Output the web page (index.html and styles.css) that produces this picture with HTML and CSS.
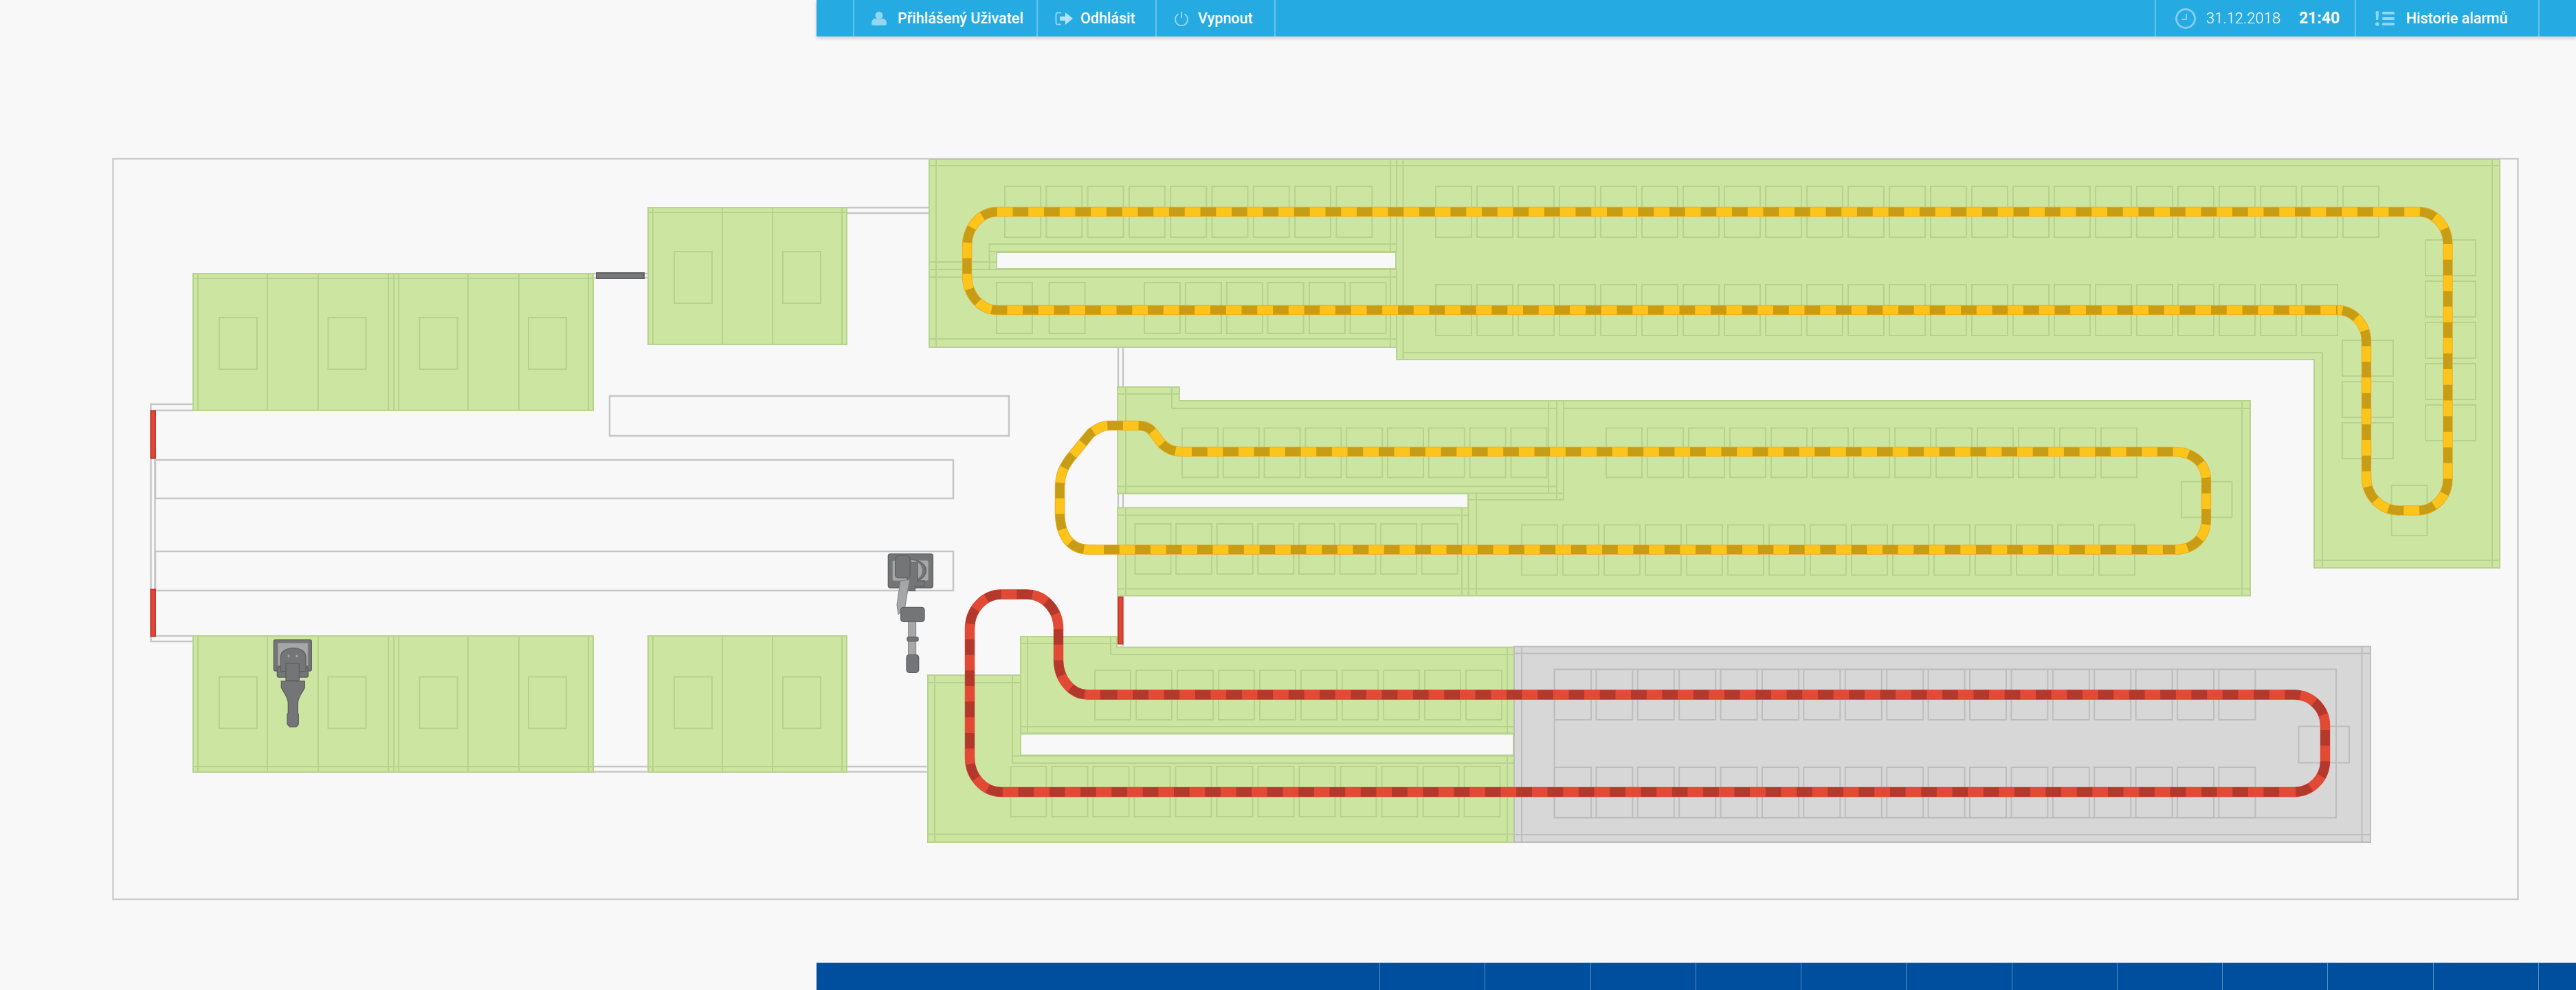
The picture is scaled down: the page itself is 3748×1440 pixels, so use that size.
FILE: index.html
```html
<!DOCTYPE html>
<html lang="cs">
<head>
<meta charset="utf-8">
<title>Přehled linky</title>
<link rel="stylesheet" href="styles.css">
</head>
<body>
<div class="page">
  <header class="topbar">
    <div class="cell cell-end"></div>
    <div class="cell cell-user">
      <svg class="icon" width="22" height="20" viewBox="0 0 22 20"><circle class="icon-fill" cx="11" cy="5.500" r="5.500"/><path class="icon-fill" d="M0 17c0-5 3-7 6-7 2 1.300 8 1.300 10 0 3 0 6 2 6 7 0 2-1 3-3 3H3c-2 0-3-1-3-3z"/></svg>
      <span class="label">Přihlášený Uživatel</span>
    </div>
    <div class="cell cell-short">
      <svg class="icon" width="27" height="20" viewBox="0 0 27 20"><path class="icon-line" d="M9 1.500H4Q1.500 1.500 1.500 4V16Q1.500 18.500 4 18.500H9"/><path class="icon-bright" d="M7 7h8V1l11 9-11 9v-6H7z"/></svg>
      <span class="label">Odhlásit</span>
    </div>
    <div class="cell cell-short cell-power">
      <svg class="icon" width="22" height="22" viewBox="0 0 22 22"><path class="icon-line" d="M6.500 4.500A9 9 0 1 0 15.500 4.500M11 1V10"/></svg>
      <span class="label">Vypnout</span>
    </div>
    <div class="spacer"></div>
    <div class="cell cell-clock">
      <svg class="icon" width="32" height="30" viewBox="0 0 32 30"><circle class="icon-ring" cx="16" cy="15" r="13.500"/><path class="icon-thin" d="M17 8v8h-7"/></svg>
      <span class="date">31.12.2018</span>
      <span class="time">21:40</span>
    </div>
    <div class="cell cell-history">
      <svg class="icon" width="28" height="22" viewBox="0 0 28 22"><path class="icon-fill" d="M0.500 1.500Q0.500 0 2.800 0T5 1.500L4.300 13H1.200z"/><circle class="icon-fill" cx="2.800" cy="19" r="2.800"/><rect class="icon-fill" x="10" y="1" width="18" height="4" rx="1.500"/><rect class="icon-fill" x="10" y="9" width="18" height="4" rx="1.500"/><rect class="icon-fill" x="10" y="17" width="18" height="4" rx="1.500"/></svg>
      <span class="label">Historie alarmů</span>
    </div>
    <div class="cell cell-tail"></div>
  </header>

  <main class="stage">
    <svg class="plan" width="3748" height="1347" viewBox="0 53 3748 1347">
      <rect class="frame" x="164.500" y="231" width="3499" height="1077"/>

      <!-- stations -->
      <path class="rail" d="M887 576H1468V634H887zM226 669H1387V725H226zM226 802H1387V859H226z"/>
      <path class="rail" d="M280 588H219.500V933H280M280 597H225.500V925H280M864 398H943M864 404H943M1232 302H1352M1232 310H1352M864 1115H943M864 1122.500H943M1232 1115H1350M1232 1122.500H1350M1627 505V563M1634 505V563M1627 718V739M1634 718V738M1627 868V926M1634 868V940"/>

      <!-- left green blocks -->
      <rect class="zone" x="281" y="398" width="582" height="199"/>
      <rect class="zone" x="943" y="302" width="289" height="199"/>
      <rect class="zone" x="281" y="925" width="582" height="198"/>
      <rect class="zone" x="943" y="925" width="289" height="198"/>
      <path class="zone-line" d="M281 405H863M288 398V597M389 398V597M463 398V597M565 398V597M573 398V597M580 398V597M681 398V597M755 398V597M856 398V597"/>
      <path class="zone-line" d="M943 309H1232M950 302V501M1051 302V501M1124 302V501M1225 302V501"/>
      <path class="zone-line" d="M281 1115H863M288 925V1123M389 925V1123M463 925V1123M565 925V1123M573 925V1123M580 925V1123M681 925V1123M755 925V1123M856 925V1123"/>
      <path class="zone-line" d="M943 1115H1232M950 925V1123M1051 925V1123M1124 925V1123M1225 925V1123"/>
      <path class="zone-line" d="M319 462h55v75h-55zM477.500 462h55v75h-55zM610.500 462h55v75h-55zM769 462h55v75h-55zM981 366h55v75h-55zM1139 366h55v75h-55zM319 984.500h55v75h-55zM477.500 984.500h55v75h-55zM610.500 984.500h55v75h-55zM769 984.500h55v75h-55zM981 984.500h55v75h-55zM1139 984.500h55v75h-55z"/>

      <!-- upper zone -->
      <path class="zone" fill-rule="evenodd" d="M1352 232H3637V826H3367V523H2032V505H1352ZM1450 367H2031V391H1450Z"/>
      <path class="zone-line" d="M1352 241H3637M1362 232V505M2023 232V367M2023 391V505M2032 232V367M2032 391V523M2041.500 232V523M2041.500 513H3379M3379 513V826M3367 523V826M3626 232V826M3367 815H3637M1439.500 392V355H2032M1439.500 366H2032M1352 381H1450M1352 392H2032M1352 403H2032M1352 493H2032"/>
      <path class="zone-line" d="M1462 271h52v74h-52zm60.300 0h52v74h-52zm60.300 0h52v74h-52zm60.300 0h52v74h-52zm60.300 0h52v74h-52zm60.300 0h52v74h-52zm60.300 0h52v74h-52zm60.300 0h52v74h-52zm60.300 0h52v74h-52z"/>
      <path class="zone-line" d="M1450 411h52v74h-52zM1526.500 411h52v74h-52zM1665 411h52v74h-52zM1725 411h52v74h-52zM1785 411h52v74h-52zM1844.600 411h52v74h-52zM1905 411h52v74h-52zM1964.600 411h52v74h-52z"/>
      <path class="zone-line" d="M2089 271h52v74h-52zm60 0h52v74h-52zm60 0h52v74h-52zm60 0h52v74h-52zm60 0h52v74h-52zm60 0h52v74h-52zm60 0h52v74h-52zm60 0h52v74h-52zm60 0h52v74h-52zm60 0h52v74h-52zm60 0h52v74h-52zm60 0h52v74h-52zm60 0h52v74h-52zm60 0h52v74h-52zm60 0h52v74h-52zm60 0h52v74h-52zm60 0h52v74h-52zm60 0h52v74h-52zm60 0h52v74h-52zm60 0h52v74h-52zm60 0h52v74h-52zm60 0h52v74h-52zm60 0h52v74h-52z"/>
      <path class="zone-line" d="M2089 414h52v74h-52zm60 0h52v74h-52zm60 0h52v74h-52zm60 0h52v74h-52zm60 0h52v74h-52zm60 0h52v74h-52zm60 0h52v74h-52zm60 0h52v74h-52zm60 0h52v74h-52zm60 0h52v74h-52zm60 0h52v74h-52zm60 0h52v74h-52zm60 0h52v74h-52zm60 0h52v74h-52zm60 0h52v74h-52zm60 0h52v74h-52zm60 0h52v74h-52zm60 0h52v74h-52zm60 0h52v74h-52zm60 0h52v74h-52zm60 0h52v74h-52zm60 0h52v74h-52z"/>
      <path class="zone-line" d="M3529 349h73v52h-73zm0 60h73v52h-73zm0 60h73v52h-73zm0 60h73v52h-73zm0 60h73v52h-73zM3408 495h74v52h-74zm0 60h74v52h-74zm0 60h74v52h-74zM3479.500 706h52v73h-52z"/>

      <!-- middle zone -->
      <path class="zone" d="M1626 563H1716V583H3274V866.500H1626V738.500H2136V718H1626Z"/>
      <path class="zone-line" d="M1626 573H1716M1638 563V718M1705 563V594M1705 594H2265M2275 594H3274M1626 707.500H2265M1626 717.500H2275M2136.500 727H2275M2253 583V717M2265 583V727M2275 583V727M1638 739V866.500M1626 749.500H2136M2127 739V866.500M2136.500 718V866.500M2148 718V866.500M1626 856.500H3274M3262 583V866.500"/>
      <path class="zone-line" d="M1720 622.500h52v72h-52zm59.800 0h52v72h-52zm59.800 0h52v72h-52zm59.800 0h52v72h-52zm59.800 0h52v72h-52zm59.800 0h52v72h-52zm59.800 0h52v72h-52zm59.800 0h52v72h-52zm59.800 0h52v72h-52z"/>
      <path class="zone-line" d="M2337 622.500h52v72h-52zm60 0h52v72h-52zm60 0h52v72h-52zm60 0h52v72h-52zm60 0h52v72h-52zm60 0h52v72h-52zm60 0h52v72h-52zm60 0h52v72h-52zm60 0h52v72h-52zm60 0h52v72h-52zm60 0h52v72h-52zm60 0h52v72h-52zm60 0h52v72h-52z"/>
      <path class="zone-line" d="M1651.500 762h52v73h-52zm59.600 0h52v73h-52zm59.600 0h52v73h-52zm59.600 0h52v73h-52zm59.600 0h52v73h-52zm59.600 0h52v73h-52zm59.600 0h52v73h-52zm59.600 0h52v73h-52z"/>
      <path class="zone-line" d="M2214 763.500h52v73h-52zm60 0h52v73h-52zm60 0h52v73h-52zm60 0h52v73h-52zm60 0h52v73h-52zm60 0h52v73h-52zm60 0h52v73h-52zm60 0h52v73h-52zm60 0h52v73h-52zm60 0h52v73h-52zm60 0h52v73h-52zm60 0h52v73h-52zm60 0h52v73h-52zm60 0h52v73h-52zm60 0h52v73h-52zM3174 700.500h73.500v52h-73.500z"/>

      <!-- lower zone -->
      <path class="zone" fill-rule="evenodd" d="M1350 982H1485V926H1625V941.500H2203V1225H1350ZM1485 1067.500H2202V1098.500H1485Z"/>
      <path class="zone-line" d="M1350 993H1485M1360 982V1224M1473 982V1110M1485 926V1067M1495 926V1066M1485 936H1625M1616 926V952M1616 952H2203M1485 1057H2203M1485 1066.500H2203M1473 1099.500H2203M1473 1110H2203M1350 1213.500H2203M2193 941.500V1067M2193 1099V1225"/>
      <path class="zone-line" d="M1593 975h52v72h-52zm60 0h52v72h-52zm60 0h52v72h-52zm60 0h52v72h-52zm60 0h52v72h-52zm60 0h52v72h-52zm60 0h52v72h-52zm60 0h52v72h-52zm60 0h52v72h-52zm60 0h52v72h-52z"/>
      <path class="zone-line" d="M1470.500 1115h52v73h-52zm60 0h52v73h-52zm60 0h52v73h-52zm60 0h52v73h-52zm60 0h52v73h-52zm60 0h52v73h-52zm60 0h52v73h-52zm60 0h52v73h-52zm60 0h52v73h-52zm60 0h52v73h-52zm60 0h52v73h-52zm60 0h52v73h-52z"/>

      <!-- grey zone -->
      <rect class="zone-off" x="2203" y="940.500" width="1246" height="284.500"/>
      <path class="off-line" d="M2203 950.500H3449M2203 1214H3449M2214 940.500V1225M3436.500 940.500V1225M2261.500 973.500H3399V1189.500H2261.500Z"/>
      <path class="off-line" d="M2262 974h53v73h-53zm60.400 0h53v73h-53zm60.400 0h53v73h-53zm60.400 0h53v73h-53zm60.400 0h53v73h-53zm60.400 0h53v73h-53zm60.400 0h53v73h-53zm60.400 0h53v73h-53zm60.400 0h53v73h-53zm60.400 0h53v73h-53zm60.400 0h53v73h-53zm60.400 0h53v73h-53zm60.400 0h53v73h-53zm60.400 0h53v73h-53zm60.400 0h53v73h-53zm60.400 0h53v73h-53zm60.400 0h53v73h-53z"/>
      <path class="off-line" d="M2262 1116h53v73h-53zm60.400 0h53v73h-53zm60.400 0h53v73h-53zm60.400 0h53v73h-53zm60.400 0h53v73h-53zm60.400 0h53v73h-53zm60.400 0h53v73h-53zm60.400 0h53v73h-53zm60.400 0h53v73h-53zm60.400 0h53v73h-53zm60.400 0h53v73h-53zm60.400 0h53v73h-53zm60.400 0h53v73h-53zm60.400 0h53v73h-53zm60.400 0h53v73h-53zm60.400 0h53v73h-53zm60.400 0h53v73h-53zM3344.500 1056.500h73.500v53h-73.500z"/>

      <!-- connector and gates -->
      <rect class="gate" x="868" y="397" width="69" height="8"/>
      <path class="stop" d="M219.500 597.500h6.500v69h-6.500zM219.500 857.500h6.500v68h-6.500zM1627 868.500h6.500v68h-6.500z"/>

      <!-- yellow tracks -->
      <path class="track-edge-y" d="M1451 308H3519A42.500 47 0 0 1 3561.500 355V697A44 45.500 0 0 1 3517.500 742.500H3490A47 48 0 0 1 3443 694.500V497A42 46 0 0 0 3401 451H1451A44 50 0 0 1 1407 401V358A44 50 0 0 1 1451 308Z"/>
      <path class="track-y" d="M1451 308H3519A42.500 47 0 0 1 3561.500 355V697A44 45.500 0 0 1 3517.500 742.500H3490A47 48 0 0 1 3443 694.500V497A42 46 0 0 0 3401 451H1451A44 50 0 0 1 1407 401V358A44 50 0 0 1 1451 308Z"/>
      <path class="dash-y" d="M1473.500 308H3519A42.500 47 0 0 1 3561.500 355V697A44 45.500 0 0 1 3517.500 742.500H3490A47 48 0 0 1 3443 694.500V497A42 46 0 0 0 3401 451"/>
      <path class="dash-y" d="M1488 451H3401"/>
      <path class="dash-y" stroke-dashoffset="-22.750" d="M1473.500 308H1451A44 50 0 0 0 1407 358V401A44 50 0 0 0 1451 451H1488"/>

      <path class="track-edge-y" d="M1719 657H3162C3190 657 3210 672 3210 700V754C3210 782 3192 799.500 3165 799.500H1585C1558 799.500 1542 780 1542 745V712C1542 692 1546 682 1556 668L1587 630C1597 623 1604 619 1612 619H1656C1672 619 1676 626 1684 637C1692 650 1703 657 1719 657Z"/>
      <path class="track-y" d="M1719 657H3162C3190 657 3210 672 3210 700V754C3210 782 3192 799.500 3165 799.500H1585C1558 799.500 1542 780 1542 745V712C1542 692 1546 682 1556 668L1587 630C1597 623 1604 619 1612 619H1656C1672 619 1676 626 1684 637C1692 650 1703 657 1719 657Z"/>
      <path class="dash-h" stroke-dashoffset="-15" d="M1719 657H3162C3190 657 3210 672 3210 700V754C3210 782 3192 799.500 3165 799.500"/>
      <path class="dash-h" stroke-dashoffset="-21" d="M1585 799.500H3165"/>
      <path class="dash-h" stroke-dashoffset="-8" d="M1585 799.500C1558 799.500 1542 780 1542 745V712C1542 692 1546 682 1556 668L1587 630C1597 623 1604 619 1612 619H1656C1672 619 1676 626 1684 637C1692 650 1703 657 1719 657"/>

      <!-- red track -->
      <path class="track-edge-r" d="M1583 1010.500H3338A45 45 0 0 1 3383 1055.500V1107A45 45 0 0 1 3338 1152H1457A46 50 0 0 1 1411 1102V914.500A46 50 0 0 1 1457 864.500H1494A46 50 0 0 1 1540 914.500V960A43 50.500 0 0 0 1583 1010.500Z"/>
      <path class="track-r" d="M1583 1010.500H3338A45 45 0 0 1 3383 1055.500V1107A45 45 0 0 1 3338 1152H1457A46 50 0 0 1 1411 1102V914.500A46 50 0 0 1 1457 864.500H1494A46 50 0 0 1 1540 914.500V960A43 50.500 0 0 0 1583 1010.500Z"/>
      <path class="dash-r" d="M1603 1010.500H3338A45 45 0 0 1 3383 1055.500V1107A45 45 0 0 1 3338 1152"/>
      <path class="dash-r" d="M1481.500 1152H3338"/>
      <path class="dash-r" stroke-dashoffset="-22.650" d="M1481.500 1152H1457A46 50 0 0 1 1411 1102V914.500A46 50 0 0 1 1457 864.500H1494A46 50 0 0 1 1540 914.500V960A43 50.500 0 0 0 1583 1010.500H1603"/>

      <!-- robot on the upper aisle -->
      <g transform="translate(1260 790) scale(.3333)">
        <rect class="robot" x="97" y="47" width="195" height="148" rx="10"/>
        <rect class="robot-light" x="115" y="75" width="158" height="90" rx="8"/>
        <path class="robot" d="M190 72C236 72 262 95 262 120S236 168 190 168Z"/>
        <path class="robot-light" d="M196 72C228 76 246 95 246 120S228 160 196 165Z"/>
        <path class="robot" d="M180 85H225V165H255V188H214V208H180Z"/>
        <path class="robot-light" d="M150 165L190 160L170 280L141 312L135 270Z"/>
        <rect class="robot" x="128" y="55" width="64" height="97" rx="14"/>
        <rect class="robot-light" x="185" y="340" width="33" height="150"/>
        <rect class="robot" x="180" y="410" width="48" height="18" rx="5"/>
        <rect class="robot" x="152" y="280" width="103" height="63" rx="12"/>
        <rect class="robot" x="177" y="487" width="53" height="78" rx="12"/>
      </g>

      <!-- robot on the lower aisle -->
      <g transform="translate(380 920) scale(.3333)">
        <rect class="robot" x="55" y="32" width="165" height="136" rx="8"/>
        <rect class="robot-light" x="72" y="45" width="133" height="100" rx="4"/>
        <rect class="robot" x="70" y="150" width="135" height="45" rx="7"/>
        <path class="robot" d="M85 170V108C85 82 110 68 140 68S195 82 195 108V170Z"/>
        <circle class="robot-light" cx="120" cy="103" r="6"/>
        <circle class="robot-light" cx="155" cy="103" r="6"/>
        <rect class="robot" x="108" y="135" width="58" height="75"/>
        <path class="robot" d="M88 212H190V240C180 265 160 280 160 310V350L163 358V400L153 412H125L114 400V358L118 350V310C118 280 98 265 88 240Z"/>
      </g>
    </svg>
  </main>

  <footer class="bottombar">
    <div class="bottom-lead"></div>
    <div class="bottom-cell"></div>
    <div class="bottom-cell"></div>
    <div class="bottom-cell"></div>
    <div class="bottom-cell"></div>
    <div class="bottom-cell"></div>
    <div class="bottom-cell"></div>
    <div class="bottom-cell"></div>
    <div class="bottom-cell"></div>
    <div class="bottom-cell"></div>
    <div class="bottom-cell"></div>
    <div class="bottom-cell"></div>
    <div class="bottom-cell bottom-last"></div>
  </footer>
</div>
</body>
</html>
```

FILE: styles.css
```css
* { box-sizing: border-box; }

html, body {
  margin: 0;
  padding: 0;
  background: #f8f8f8;
}

.page {
  width: 3748px;
  height: 1440px;
  overflow: hidden;
  display: grid;
  grid-template-rows: 53px 1347px 40px;
  font-family: Roboto, "Liberation Sans", sans-serif;
}

.topbar {
  position: relative;
  z-index: 2;
  margin-left: 1188px;
  display: flex;
  align-items: stretch;
  background: #25aae2;
  color: #fff;
  box-shadow: 0 3px 5px rgba(0, 0, 0, .18);
}

.cell {
  display: flex;
  align-items: center;
  flex: none;
  border-right: 2px solid rgba(255, 255, 255, .3);
}

.cell-end { width: 55px; }
.cell-user { width: 267px; padding-left: 25px; gap: 16px; }
.cell-short { width: 173px; padding-left: 25px; gap: 10px; }
.cell-power { gap: 13px; }
.cell-clock { width: 293px; padding-left: 27px; border-left: 2px solid rgba(255, 255, 255, .3); }
.cell-history { width: 267px; padding-left: 28px; gap: 17px; }
.cell-tail { width: 54px; border-right: 0; }
.spacer { flex: 1; }

.icon { flex: none; display: block; }
.icon-fill { fill: #93d5f2; }
.icon-bright { fill: #b4e2f6; }
.icon-line { fill: none; stroke: #93d5f2; stroke-width: 2; }
.icon-ring { fill: none; stroke: #82cdef; stroke-width: 3; }
.icon-thin { fill: none; stroke: #82cdef; stroke-width: 2; }

.label { font-size: 21.500px; font-weight: 500; white-space: nowrap; }
.date { font-size: 22px; font-weight: 300; margin-left: 14px; }
.time { font-size: 23px; font-weight: 700; margin-left: 27px; }

.stage { position: relative; z-index: 1; }
.plan { display: block; }

.frame { fill: none; stroke: #cdcdcd; stroke-width: 2.500; }
.rail { fill: none; stroke: #c6c6c6; stroke-width: 2.500; }
.zone { fill: #cce6a2; stroke: #b8d38f; stroke-width: 2; }
.zone-line { fill: none; stroke: #b7d28e; stroke-width: 2; }
.zone-off { fill: #d7d7d7; stroke: #bdbdbd; stroke-width: 2; }
.off-line { fill: none; stroke: #bdbdbd; stroke-width: 2; }
.gate { fill: #77787a; stroke: #5f6062; stroke-width: 2; }
.stop { fill: #e0463a; stroke: #c33a2b; stroke-width: 2; }

.track-edge-y, .track-edge-r, .track-y, .track-r, .dash-y, .dash-h, .dash-r { fill: none; }
.track-edge-y { stroke: #f2a92e; stroke-width: 14.500; }
.track-y { stroke: #fdc51a; stroke-width: 12.500; }
.dash-y { stroke: #c79d15; stroke-width: 13; stroke-dasharray: 22.750 22.750; }
.dash-h { stroke: #c79d15; stroke-width: 13; stroke-dasharray: 22.660 22.660; }
.track-edge-r { stroke: #d8503f; stroke-width: 14.500; }
.track-r { stroke: #e34a36; stroke-width: 13.500; }
.dash-r { stroke: #b2392b; stroke-width: 13.500; stroke-dasharray: 22.650 22.650; }

.robot { fill: #747577; stroke: #5f6062; stroke-width: 4; }
.robot-light { fill: #a5a7a9; stroke: #7d7e80; stroke-width: 3; }

.bottombar {
  position: relative;
  z-index: 2;
  margin-left: 1188px;
  display: flex;
  background: #004f9e;
  border-top: 1px solid #7fa6cf;
}

.bottom-lead { width: 820px; flex: none; border-right: 1px solid rgba(255, 255, 255, .35); }
.bottom-cell { width: 153.250px; flex: none; border-right: 1px solid rgba(255, 255, 255, .35); }
.bottom-last { width: 55px; border-right: 0; }
```
